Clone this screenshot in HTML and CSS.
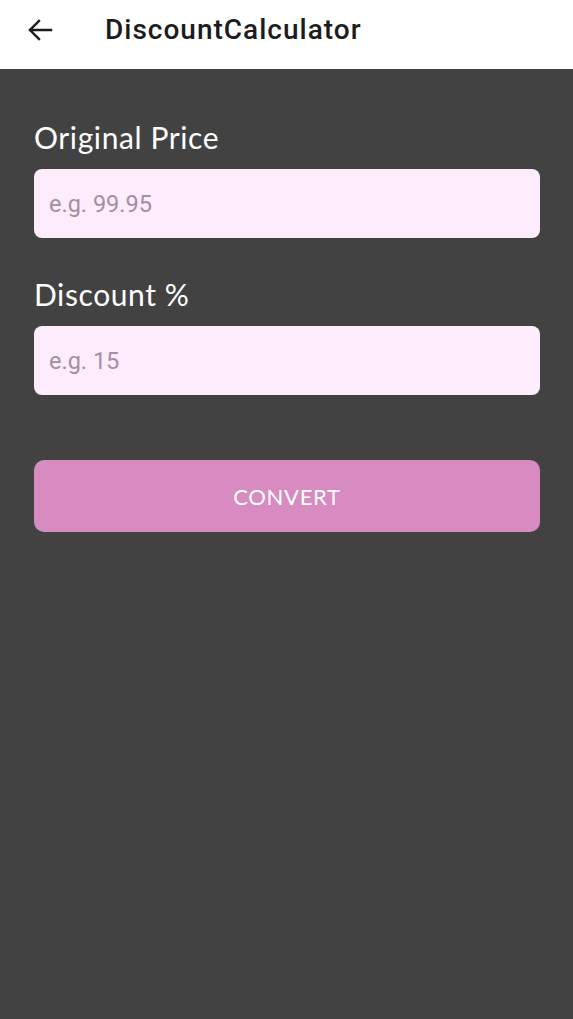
FILE: index.html
```html
<!DOCTYPE html>
<html>
<head>
<meta charset="utf-8">
<link rel="stylesheet" href="styles.css">
</head>
<body>
<header class="appbar">
  <span class="back">
    <svg width="28" height="28" viewBox="0 0 28 28"><path d="M25 14H4M13 5L4 14l9 9" fill="none" stroke="#1c1c1c" stroke-width="2.4" stroke-linecap="square"/></svg>
  </span>
  <h1 class="title">DiscountCalculator</h1>
</header>
<main class="content">
  <div class="field">
    <label class="label">Original Price</label>
    <div class="input">e.g. 99.95</div>
  </div>
  <div class="field">
    <label class="label">Discount %</label>
    <div class="input">e.g. 15</div>
  </div>
  <button class="btn">CONVERT</button>
</main>
</body>
</html>
```
FILE: styles.css
```css
html, body {
  margin: 0;
  padding: 0;
  height: 100%;
}
body {
  background: #424242;
  font-family: "Lato", "Open Sans", sans-serif;
  display: flex;
  flex-direction: column;
}
.appbar {
  background: #ffffff;
  height: 69px;
  display: flex;
  align-items: center;
  flex-shrink: 0;
}
.back {
  width: 28px;
  height: 28px;
  margin-left: 26px;
  margin-top: -10px;
  display: flex;
}
.title {
  margin: 0 0 0 51px;
  margin-top: -10px;
  font-family: "Roboto", sans-serif;
  font-weight: 500;
  font-size: 28px;
  color: #1c1c1c;
  letter-spacing: 1px;
}
.content {
  padding: 50px 33px 0 34px;
  display: flex;
  flex-direction: column;
}
.field {
  display: flex;
  flex-direction: column;
  margin-bottom: 38px;
}
.field + .field {
  margin-bottom: 23px;
}
.label {
  color: #ffffff;
  font-size: 30px;
  line-height: 36px;
  margin-bottom: 14px;
  letter-spacing: 0.6px;
}
.input {
  background: #fdecfb;
  border-radius: 8px;
  height: 69px;
  display: flex;
  align-items: center;
  padding-left: 15px;
  font-family: "Roboto", sans-serif;
  font-size: 23.5px;
  color: #a48fa1;
}
.btn {
  margin-top: 42px;
  height: 72px;
  border: none;
  border-radius: 10px;
  background: #d78bc0;
  color: #ffffff;
  font-family: "Lato", sans-serif;
  font-size: 22px;
  letter-spacing: 0.7px;
}
```
